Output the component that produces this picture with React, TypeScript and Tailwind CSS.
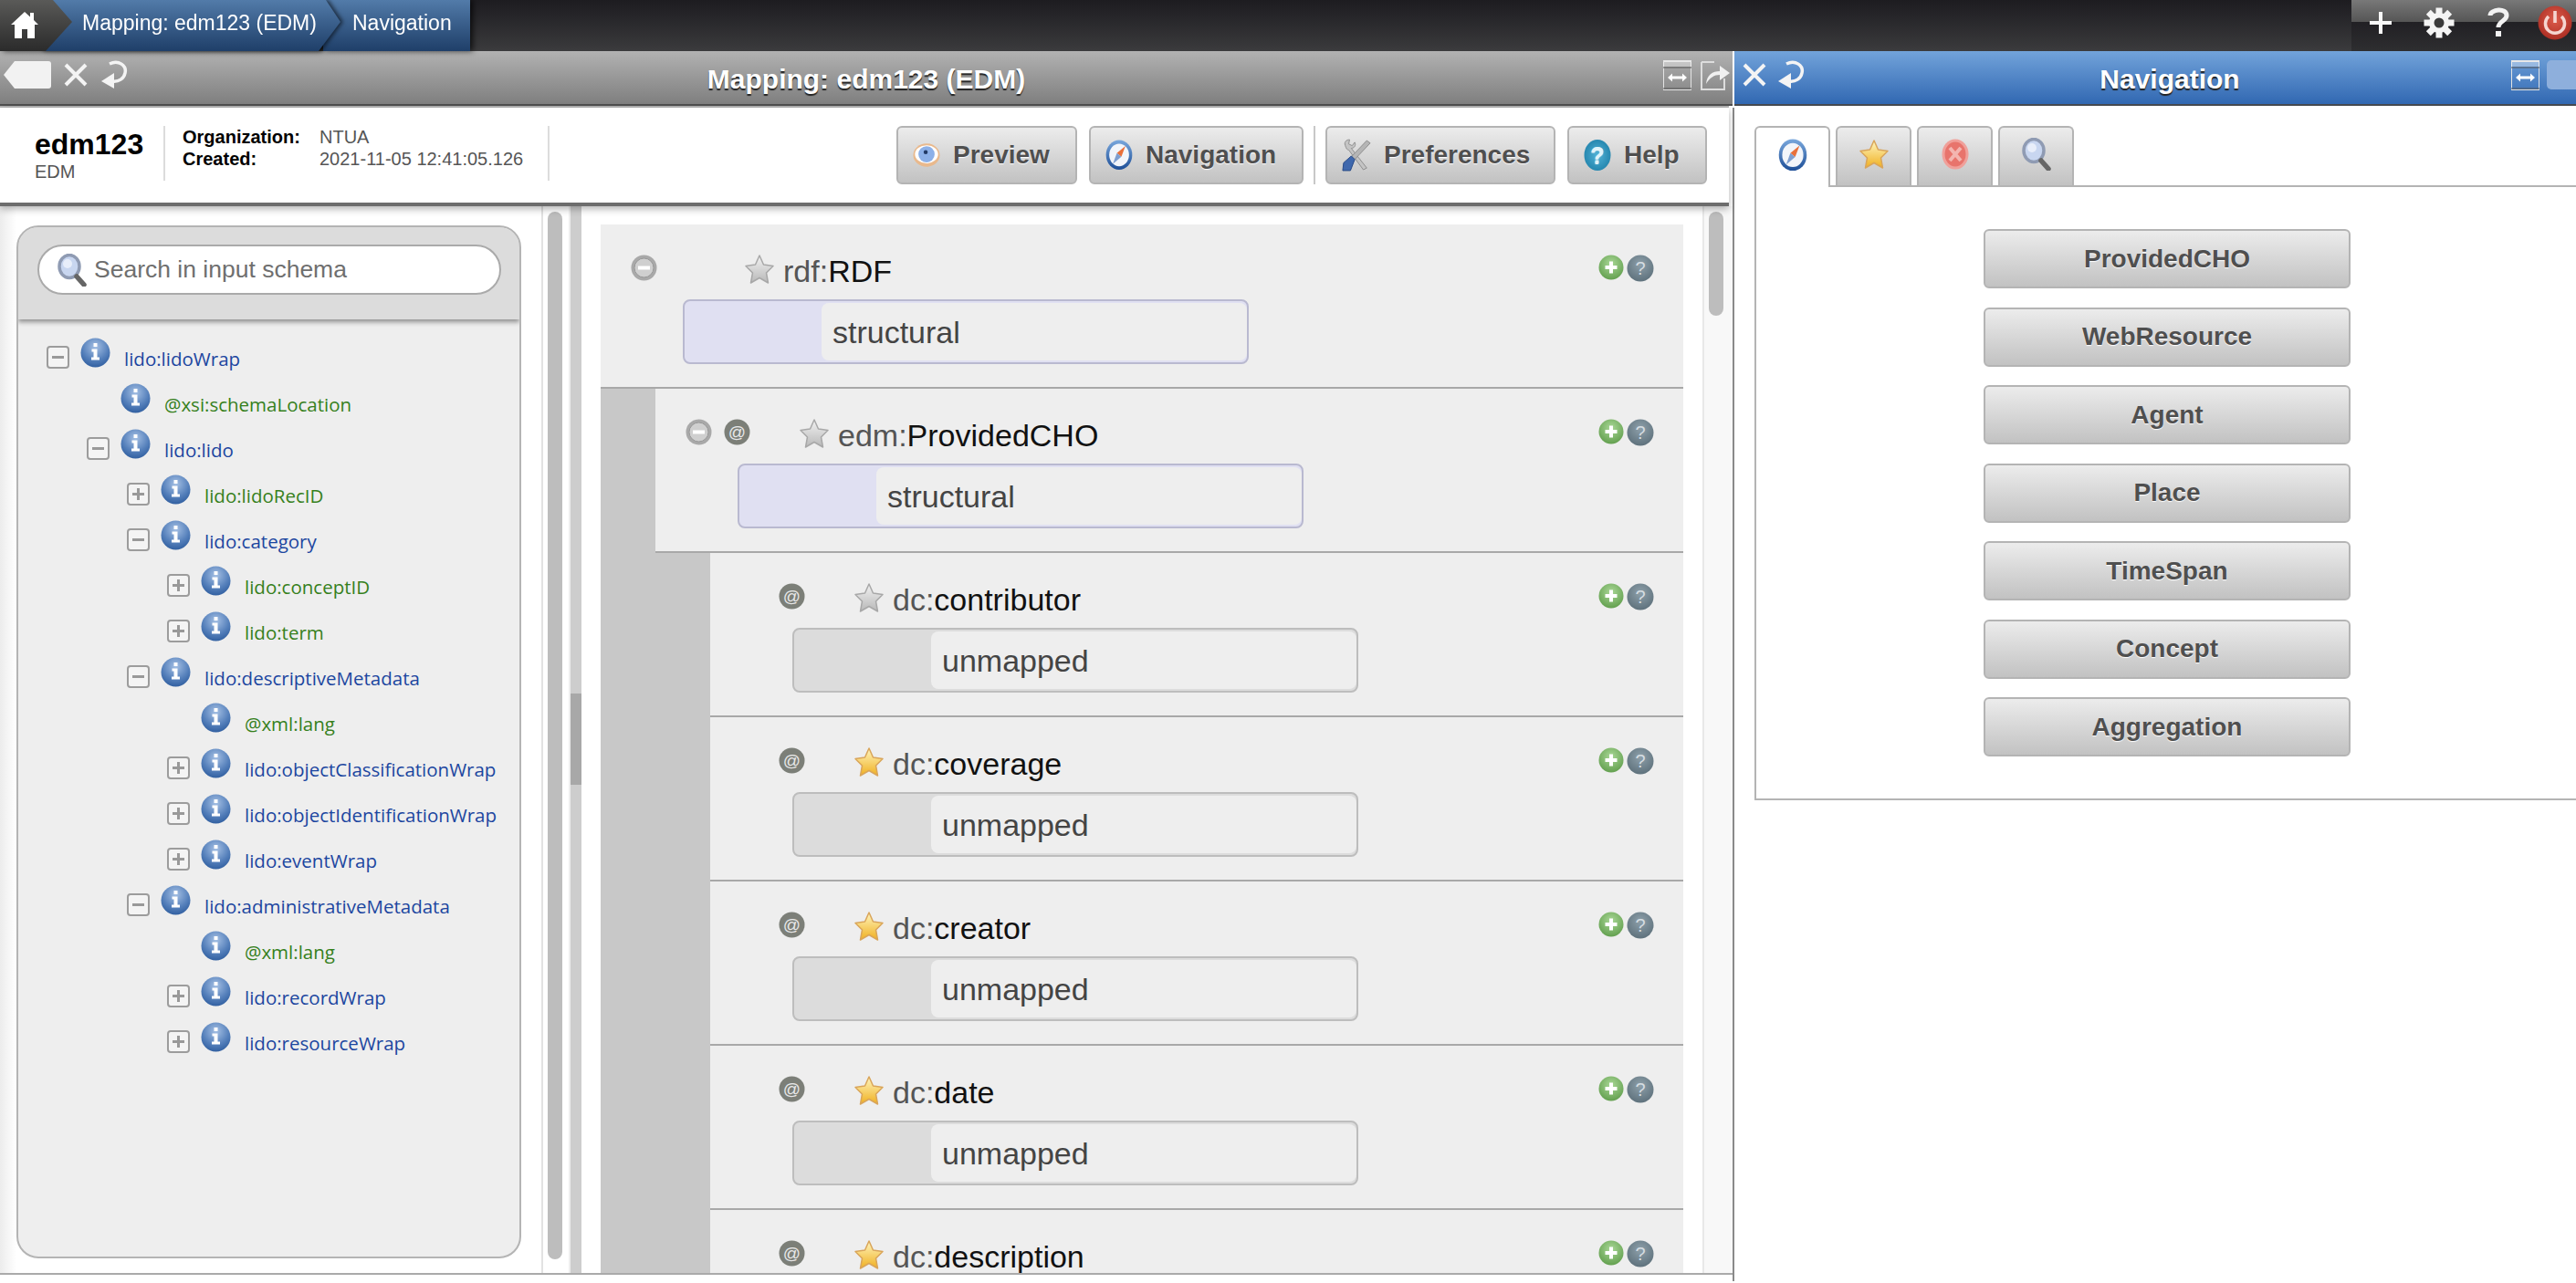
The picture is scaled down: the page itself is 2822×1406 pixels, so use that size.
import React from "react";

const Star = ({ gold = false }: { gold?: boolean }) => (
  <svg width="34" height="34" viewBox="0 0 34 34" className="shrink-0">
    <defs>
      <linearGradient id={gold ? "sg" : "sn"} x1="0" y1="0" x2="0" y2="1">
        <stop offset="0" stopColor={gold ? "#fff6c0" : "#f2f2f2"} />
        <stop offset="1" stopColor={gold ? "#f0b020" : "#b8b8b8"} />
      </linearGradient>
    </defs>
    <path
      d="M17 2 L21.5 12 L32 13.5 L24.5 21 L26.5 32 L17 26.5 L7.5 32 L9.5 21 L2 13.5 L12.5 12 Z"
      fill={gold ? "url(#sg)" : "url(#sn)"}
      stroke={gold ? "#d9a55a" : "#a8a8a8"}
      strokeWidth="1.5"
      strokeLinejoin="round"
    />
  </svg>
);

const InfoOrb = () => (
  <svg width="33" height="33" viewBox="0 0 33 33" className="shrink-0">
    <defs>
      <radialGradient id="orb" cx="0.5" cy="0.3" r="0.75">
        <stop offset="0" stopColor="#a5c0e4" />
        <stop offset="0.6" stopColor="#5580bb" />
        <stop offset="1" stopColor="#2b5a9c" />
      </radialGradient>
    </defs>
    <circle cx="16.5" cy="16.5" r="16" fill="url(#orb)" />
    <rect x="14.5" y="6" width="4" height="4" fill="#fff" />
    <path d="M12.5 12.5 h6 v9 h2.5 v3 h-9 v-3 h2.5 v-6 h-2 z" fill="#fff" />
  </svg>
);

const TreeBox = ({ kind }: { kind: "plus" | "minus" }) => (
  <svg width="25" height="25" viewBox="0 0 25 25" className="shrink-0">
    <rect x="1" y="1" width="23" height="23" rx="3" fill="#f4f4f4" stroke="#9c9c9c" strokeWidth="2" />
    <rect x="6" y="11" width="13" height="3" fill="#999" />
    {kind === "plus" && <rect x="11" y="6" width="3" height="13" fill="#999" />}
  </svg>
);

const MinusCircle = () => (
  <svg width="29" height="29" viewBox="0 0 29 29" className="shrink-0">
    <circle cx="14.5" cy="14.5" r="14" fill="#a9a9a9" />
    <circle cx="14.5" cy="14.5" r="10.5" fill="#cfcfcf" stroke="#989898" />
    <rect x="8" y="12.5" width="13" height="4" fill="#fff" />
  </svg>
);

const AtCircle = () => (
  <svg width="29" height="29" viewBox="0 0 29 29" className="shrink-0">
    <circle cx="14.5" cy="14.5" r="14" fill="#7c7f78" />
    <text x="14.5" y="20.5" textAnchor="middle" fontSize="19" fill="#e8e8e8" fontFamily="Liberation Sans">@</text>
  </svg>
);

const PlusCircle = () => (
  <svg width="28" height="28" viewBox="0 0 28 28" className="shrink-0">
    <defs>
      <radialGradient id="pg" cx="0.5" cy="0.35" r="0.7">
        <stop offset="0" stopColor="#a9d796" />
        <stop offset="1" stopColor="#5e9c4a" />
      </radialGradient>
    </defs>
    <circle cx="14" cy="14" r="13.5" fill="url(#pg)" />
    <rect x="7.5" y="12" width="13" height="4" fill="#fff" />
    <rect x="12" y="7.5" width="4" height="13" fill="#fff" />
  </svg>
);

const QCircle = () => (
  <svg width="30" height="30" viewBox="0 0 30 30" className="shrink-0">
    <defs>
      <radialGradient id="qg" cx="0.5" cy="0.35" r="0.7">
        <stop offset="0" stopColor="#8ea0aa" />
        <stop offset="1" stopColor="#5b6e79" />
      </radialGradient>
    </defs>
    <circle cx="15" cy="15" r="14.5" fill="url(#qg)" />
    <text x="15" y="22" textAnchor="middle" fontSize="20" fill="#d5dde2" fontFamily="Liberation Sans">?</text>
  </svg>
);

const Home = () => (
  <svg width="30" height="32" viewBox="0 0 30 32">
    <path d="M15 2 L21 7.5 V3 h4 V11 L30 16 H26 V31 H18 V21 H12 V31 H4 V16 H0 Z" fill="#fff" />
  </svg>
);

const Tag = () => (
  <svg width="54" height="32" viewBox="0 0 54 32" className="shrink-0">
    <path d="M13 1 H50 Q53 1 53 4 V28 Q53 31 50 31 H13 L1 16 Z" fill="#f2f2f2" />
  </svg>
);

const XMark = () => (
  <svg width="26" height="26" viewBox="0 0 26 26" className="shrink-0">
    <path d="M2 2 L24 24 M24 2 L2 24" stroke="#f4f4f4" strokeWidth="4" />
  </svg>
);

const Undo = () => (
  <svg width="30" height="32" viewBox="0 0 30 32" className="shrink-0">
    <path d="M10 4 C20 -1 29 6 27 14 C26 20 20 24 13 23" fill="none" stroke="#f4f4f4" strokeWidth="3.5" />
    <path d="M1 23 L15 14 L15 31 Z" fill="#f4f4f4" />
  </svg>
);

const ExpandWin = () => (
  <svg width="31" height="33" viewBox="0 0 31 33" className="shrink-0">
    <rect x="0.5" y="0.5" width="30" height="32" fill="none" stroke="#e4e4e4" />
    <rect x="0" y="0" width="31" height="2" fill="#e8e8e8" />
    <rect x="0" y="2" width="31" height="5" fill="#ffffff" fillOpacity="0.35" />
    <rect x="0" y="7" width="31" height="2" fill="#555" fillOpacity="0.5" />
    <rect x="0" y="30" width="31" height="2" fill="#555" fillOpacity="0.5" />
    <path d="M5 19 L10 14.5 V17.5 H21 V14.5 L26 19 L21 23.5 V20.5 H10 V23.5 Z" fill="#fff" />
  </svg>
);

const ShareIcon = () => (
  <svg width="33" height="33" viewBox="0 0 33 33" className="shrink-0">
    <path d="M1 2 H15 M1 2 V32 H26 V20" fill="none" stroke="#ddd" strokeWidth="2" />
    <path d="M6 26 C7 16 13 12 21 12 V6 L32 14 L21 22 V16 C15 16 10 19 6 26 Z" fill="#f0f0f0" />
  </svg>
);

const Compass = ({ s = 30 }: { s?: number }) => (
  <svg width={s} height={s * 1.12} viewBox="0 0 30 34" className="shrink-0">
    <defs>
      <linearGradient id="cg" x1="0" y1="0" x2="0" y2="1">
        <stop offset="0" stopColor="#79a7dc" />
        <stop offset="1" stopColor="#1d4e97" />
      </linearGradient>
    </defs>
    <ellipse cx="15" cy="17" rx="14.5" ry="16.5" fill="url(#cg)" />
    <ellipse cx="15" cy="17" rx="11" ry="12.5" fill="#f2f5fa" />
    <path d="M22 7 L12.5 15 L17.5 19 Z" fill="#e9703a" />
    <path d="M8 27 L12.5 15 L17.5 19 Z" fill="#7f9fd0" />
  </svg>
);

const Eye = () => (
  <svg width="30" height="30" viewBox="0 0 32 32" className="shrink-0">
    <ellipse cx="16" cy="16" rx="15.5" ry="13.5" fill="#e9b98d" />
    <ellipse cx="16" cy="15" rx="13.5" ry="10.5" fill="#fff" />
    <circle cx="16" cy="15" r="9.5" fill="#8cb0e8" />
    <circle cx="15" cy="12.5" r="2.4" fill="#223a66" />
  </svg>
);

const Tools = () => (
  <svg width="32" height="38" viewBox="0 0 34 38" className="shrink-0">
    <path d="M4 8 C2 3 6 1 9 1 L8 6 L12 8 L15 4 C17 8 14 11 11 11 L29 34 L25 36 L8 13 C6 13 5 11 4 8 Z" fill="#c4c4c4" stroke="#8c8c8c" />
    <path d="M29 2 L33 5 L15 24 L11 21 Z" fill="#b5b5b5" stroke="#8c8c8c" />
    <path d="M11 20 L15 24 L10 37 L1 37 L2 28 Z" fill="#3f68ad" stroke="#234684" />
  </svg>
);

const HelpOrb = () => (
  <svg width="30" height="36" viewBox="0 0 30 36" className="shrink-0">
    <defs>
      <radialGradient id="hg" cx="0.5" cy="0.5" r="0.6">
        <stop offset="0" stopColor="#52b2d6" />
        <stop offset="1" stopColor="#1d7fa8" />
      </radialGradient>
    </defs>
    <ellipse cx="15" cy="18" rx="14.5" ry="17" fill="url(#hg)" />
    <text x="15" y="27" textAnchor="middle" fontSize="25" fill="#dff3fa" fontFamily="Liberation Sans">?</text>
  </svg>
);

const RedX = () => (
  <svg width="30" height="34" viewBox="0 0 30 34" className="shrink-0">
    <ellipse cx="15" cy="17" rx="14.5" ry="16.5" fill="#f0a09a" />
    <ellipse cx="15" cy="17" rx="11.5" ry="13.5" fill="#e8746c" />
    <path d="M9 10 L21 24 M21 10 L9 24" stroke="#f3b5b0" strokeWidth="4" />
  </svg>
);

const Magnifier = ({ w = 32, h = 36 }: { w?: number; h?: number }) => (
  <svg width={w} height={h} viewBox="0 0 32 36" className="shrink-0">
    <ellipse cx="13" cy="14" rx="11" ry="12.5" fill="#c8d6f0" stroke="#8f9bb3" strokeWidth="3.5" />
    <ellipse cx="11" cy="11" rx="5" ry="5" fill="#e8eefa" />
    <path d="M21 25 L29 34" stroke="#666" strokeWidth="5.5" strokeLinecap="round" />
  </svg>
);

const Gear = () => (
  <svg width="34" height="34" viewBox="0 0 34 34" className="shrink-0">
    <g fill="#f4f4f4">
      <circle cx="17" cy="17" r="11" />
      {[0, 45, 90, 135, 180, 225, 270, 315].map((a) => (
        <rect key={a} x="13.5" y="0.5" width="7" height="8" transform={`rotate(${a} 17 17)`} />
      ))}
    </g>
    <circle cx="17" cy="17" r="5.5" fill="#3a3a3a" />
  </svg>
);

const Power = () => (
  <svg width="38" height="38" viewBox="0 0 38 38" className="shrink-0">
    <defs>
      <radialGradient id="pw" cx="0.5" cy="0.4" r="0.65">
        <stop offset="0" stopColor="#dd5c4c" />
        <stop offset="1" stopColor="#a82a20" />
      </radialGradient>
    </defs>
    <circle cx="19" cy="19" r="18.5" fill="url(#pw)" />
    <path d="M12 12 A10.5 10.5 0 1 0 26 12" fill="none" stroke="#f5d5d0" strokeWidth="3.5" />
    <rect x="17.2" y="6" width="3.6" height="13" fill="#f5d5d0" />
  </svg>
);

type TreeRow = { level: number; box?: "plus" | "minus"; label: string; blue?: boolean };
const treeRows: TreeRow[] = [
  { level: 0, box: "minus", label: "lido:lidoWrap", blue: true },
  { level: 1, label: "@xsi:schemaLocation" },
  { level: 1, box: "minus", label: "lido:lido", blue: true },
  { level: 2, box: "plus", label: "lido:lidoRecID" },
  { level: 2, box: "minus", label: "lido:category", blue: true },
  { level: 3, box: "plus", label: "lido:conceptID" },
  { level: 3, box: "plus", label: "lido:term" },
  { level: 2, box: "minus", label: "lido:descriptiveMetadata", blue: true },
  { level: 3, label: "@xml:lang" },
  { level: 3, box: "plus", label: "lido:objectClassificationWrap", blue: true },
  { level: 3, box: "plus", label: "lido:objectIdentificationWrap", blue: true },
  { level: 3, box: "plus", label: "lido:eventWrap", blue: true },
  { level: 2, box: "minus", label: "lido:administrativeMetadata", blue: true },
  { level: 3, label: "@xml:lang" },
  { level: 3, box: "plus", label: "lido:recordWrap", blue: true },
  { level: 3, box: "plus", label: "lido:resourceWrap", blue: true },
];

type MapRow = {
  level: number;
  minus?: boolean;
  at?: boolean;
  gold?: boolean;
  prefix: string;
  name: string;
  value?: string;
};
const mapRows: MapRow[] = [
  { level: 0, minus: true, prefix: "rdf:", name: "RDF", value: "structural" },
  { level: 1, minus: true, at: true, prefix: "edm:", name: "ProvidedCHO", value: "structural" },
  { level: 2, at: true, prefix: "dc:", name: "contributor", value: "unmapped" },
  { level: 2, at: true, gold: true, prefix: "dc:", name: "coverage", value: "unmapped" },
  { level: 2, at: true, gold: true, prefix: "dc:", name: "creator", value: "unmapped" },
  { level: 2, at: true, gold: true, prefix: "dc:", name: "date", value: "unmapped" },
  { level: 2, at: true, gold: true, prefix: "dc:", name: "description" },
];

const bandClass = ["w-0", "w-[60px]", "w-[120px]"];
const indentClass = ["w-0", "w-[44px]", "w-[88px]", "w-[132px]"];

const ToolButton = ({ w, icon, label }: { w: string; icon: React.ReactNode; label: string }) => (
  <button
    className={`${w} h-[64px] flex items-center gap-[14px] pl-[16px] rounded-[6px] border-2 border-[#b4b4b4] bg-gradient-to-b from-[#ececec] to-[#c2c2c2] text-[28px] font-bold text-[#4f4f4f] [text-shadow:0_1px_1px_#fff]`}
  >
    {icon}
    <span>{label}</span>
  </button>
);

const TabBtn = ({ active, children }: { active?: boolean; children: React.ReactNode }) => (
  <div
    className={`w-[83px] flex items-center justify-center rounded-t-[6px] border-2 border-b-0 border-[#b4b4b4] pb-[6px] ${
      active ? "bg-white -mb-[2px] h-[67px] z-10" : "h-[65px] bg-gradient-to-b from-[#ececec] to-[#c2c2c2]"
    }`}
  >
    {children}
  </div>
);

export default function App() {
  return (
    <div className="w-[2822px] h-[1406px] overflow-hidden flex flex-col bg-white [font-family:'Liberation_Sans',Arial,sans-serif]">
      {/* top bar */}
      <div className="h-[56px] shrink-0 flex justify-between bg-gradient-to-b from-[#1d1c20] to-[#3b3b3d]">
        <div className="flex drop-shadow-[3px_0_3px_rgba(0,0,0,0.7)]">
          <div className="relative z-20 w-[80px] h-[56px] pl-[12px] pb-[2px] flex items-center bg-gradient-to-b from-[#5a5a58] to-[#2b2b2b] [clip-path:polygon(0_0,58px_0,79px_24px,50px_56px,0_56px)]">
            <Home />
          </div>
          <div className="relative z-10 -ml-[36px] drop-shadow-[3px_0_2px_rgba(0,0,0,0.55)]">
            <div className="w-[330px] h-[56px] pl-[46px] pb-[5px] flex items-center text-[23px] text-white bg-gradient-to-b from-[#527ba9] to-[#1f3f69] [clip-path:polygon(0_0,313px_0,329px_24px,305px_56px,0_56px)]">
              Mapping: edm123 (EDM)
            </div>
          </div>
          <div className="-ml-[20px] w-[161px] h-[56px] pl-[32px] pb-[5px] flex items-center text-[23px] text-white bg-gradient-to-b from-[#527ba9] to-[#1f3f69]">
            Navigation
          </div>
        </div>
        <div className="w-[246px] h-[56px] flex items-center pb-[6px] bg-[linear-gradient(#787878,#555_43%,#212024_43%,#2e2e30)]">
          <svg width="36" height="36" viewBox="0 0 36 36" className="shrink-0 ml-[14px]">
            <path d="M18 6 V30 M6 18 H30" stroke="#f8f8f8" strokeWidth="4" />
          </svg>
          <div className="ml-[29px]"><Gear /></div>
          <svg width="26" height="36" viewBox="0 0 26 36" className="shrink-0 ml-[35px]">
            <path d="M4 10 C4 3 22 1 22 10 C22 16 13 16 13 23" fill="none" stroke="#f2f2f2" strokeWidth="5" />
            <rect x="10" y="27" width="6" height="6" fill="#f2f2f2" />
          </svg>
          <div className="ml-[30px]"><Power /></div>
        </div>
      </div>

      <div className="flex-1 flex min-h-0">
        {/* left main */}
        <div className="w-[1900px] shrink-0 flex flex-col">
          {/* gray title */}
          <div className="h-[62px] shrink-0 border-r-2 border-white">
            <div className="h-[60px] flex items-center bg-gradient-to-b from-[#b2b2b2] to-[#7f7f7f] border-b-2 border-[#4f4f4f] pl-[3px] pb-[6px]">
              <Tag />
              <div className="ml-[13px]"><XMark /></div>
              <div className="ml-[14px]"><Undo /></div>
              <div className="flex-1 pr-[64px] pt-[9px] text-center text-[30px] font-bold text-white [text-shadow:0_2px_1px_#222]">
                Mapping: edm123 (EDM)
              </div>
              <div className="flex gap-[10px] pr-[2px]">
                <ExpandWin />
                <ShareIcon />
              </div>
            </div>
            <div className="h-[2px] w-[1894px] bg-[#b4b4b4]" />
          </div>

          <div className="flex-1 min-h-0 flex flex-col border-r-2 border-[#8a8a8a]">
            {/* header */}
            <div className="relative z-10 w-[1894px] h-[108px] shrink-0 flex items-start pt-[20px] bg-white border-b-[4px] border-[#6d6d6d] shadow-[0_3px_8px_rgba(0,0,0,0.3)]">
              <div className="w-[141px] ml-[38px] h-[60px]">
                <div className="text-[32px] leading-[36px] font-bold text-black mt-[2px]">edm123</div>
                <div className="text-[20px] leading-[24px] text-[#555]">EDM</div>
              </div>
              <div className="w-[2px] h-[60px] bg-[#dcdcdc]" />
              <div className="w-[419px] h-[60px] pl-[19px] text-[20px] leading-[24px] grid grid-cols-[150px_1fr] content-start">
                <div className="font-bold text-black">Organization:</div>
                <div className="text-[#555]">NTUA</div>
                <div className="font-bold text-black">Created:</div>
                <div className="text-[#555]">2021-11-05 12:41:05.126</div>
              </div>
              <div className="w-[2px] h-[60px] bg-[#dcdcdc]" />
              <div className="flex items-center ml-[380px] gap-[13px]">
                <ToolButton w="w-[198px]" icon={<Eye />} label="Preview" />
                <ToolButton w="w-[235px]" icon={<Compass s={30} />} label="Navigation" />
                <div className="w-[2px] h-[64px] bg-[#c8c8c8] -mx-[2px]" />
                <ToolButton w="w-[252px]" icon={<Tools />} label="Preferences" />
                <ToolButton w="w-[153px]" icon={<HelpOrb />} label="Help" />
              </div>
            </div>

            {/* body */}
            <div className="flex-1 min-h-0 flex">
              {/* tree */}
              <div className="w-[593px] shrink-0 pt-[21px] pl-[18px] bg-[linear-gradient(to_right,#ececec,#ffffff_18px)]">
                <div className="w-[553px] h-[1132px] rounded-[24px] border-2 border-[#b4b4b4] bg-[#eeeeee] overflow-hidden">
                  <div className="h-[101px] bg-[#dcdcdc] pt-[19px] pl-[21px] shadow-[0_3px_5px_rgba(0,0,0,0.4)]">
                    <div className="w-[508px] h-[55px] rounded-full bg-white border-2 border-[#aaaaaa] flex items-center pl-[20px] gap-[8px]">
                      <Magnifier w={32} h={36} />
                      <span className="text-[26.5px] text-[#6f6f6f]">Search in input schema</span>
                    </div>
                  </div>
                  <div className="pt-[20px]">
                    {treeRows.map((r, i) => (
                      <div key={i} className="h-[50px] flex pl-[31px]">
                        <div className={`${indentClass[r.level]} shrink-0`} />
                        <div className="w-[25px] pt-[9px] shrink-0">{r.box && <TreeBox kind={r.box} />}</div>
                        <div className="ml-[12px] shrink-0"><InfoOrb /></div>
                        <div
                          className={`ml-[15px] pt-[8px] whitespace-nowrap [font-family:'Open_Sans',sans-serif] text-[20.5px] leading-[30px] ${
                            r.blue ? "text-[#1c46a0]" : "text-[#36801c]"
                          }`}
                        >
                          {r.label}
                        </div>
                      </div>
                    ))}
                  </div>
                </div>
              </div>
              {/* scrollbar */}
              <div className="w-[30px] shrink-0 border-l-2 border-[#e2e2e2] pt-[6px] pl-[5px]">
                <div className="w-[16px] h-[1148px] rounded-full bg-[#bdbdbd]" />
              </div>
              {/* divider */}
              <div className="w-[14px] shrink-0 bg-[#cdcdcd] pt-[534px] border-l-2 border-[#eeeeee]">
                <div className="w-[12px] h-[100px] bg-[#a8a8a8]" />
              </div>
              {/* mapping */}
              <div className="flex-1 min-w-0 flex pt-[20px] pl-[21px] overflow-hidden">
                <div className="w-[1186px] shrink-0">
                  {mapRows.map((r, i) => (
                    <div key={i} className="h-[180px] flex">
                      <div className={`${bandClass[r.level]} shrink-0 bg-[#c8c8c8]`} />
                      <div className="flex-1 border-b-2 border-[#a8a8a8] bg-[#eeeeee] pt-[33px] pl-[33px]">
                        <div className="flex items-start h-[49px]">
                          <div className="w-[29px] shrink-0">{r.minus && <MinusCircle />}</div>
                          <div className="w-[29px] ml-[13px] shrink-0">{r.at && <AtCircle />}</div>
                          <div className="ml-[53px] -mt-[1px]"><Star gold={r.gold} /></div>
                          <div className="ml-[9px] -mt-[1px] text-[34px] leading-[38px] text-[#555]">
                            {r.prefix}
                            <span className="text-[#111]">{r.name}</span>
                          </div>
                          <div className="ml-auto flex gap-[3px] pr-[32px]">
                            <PlusCircle />
                            <QCircle />
                          </div>
                        </div>
                        {r.value && (
                          <div
                            className={`ml-[57px] w-[620px] h-[71px] rounded-[8px] border-2 flex pl-[150px] py-[2px] ${
                              r.value === "structural"
                                ? "border-[#b9b9d0] bg-[#e0e0f2]"
                                : "border-[#bdbdbd] bg-[#dcdcdc]"
                            }`}
                          >
                            <div className="flex-1 flex items-center pl-[12px] pt-[1px] rounded-[8px] bg-[#eeeeee] text-[34px] text-[#444]">
                              {r.value}
                            </div>
                          </div>
                        )}
                      </div>
                    </div>
                  ))}
                </div>
                <div className="w-[21px] shrink-0" />
                <div className="w-[2px] shrink-0 -mt-[20px] bg-[#e8e8e8]" />
                <div className="w-[32px] shrink-0 -mt-[20px] pt-[6px] pl-[5px] bg-[#f8f8f8]">
                  <div className="w-[16px] h-[114px] rounded-full bg-[#bdbdbd]" />
                </div>
              </div>
            </div>
            <div className="h-[9px] shrink-0 border-t-2 border-[#aaaaaa]" />
          </div>
          <div className="h-[2px] shrink-0" />
        </div>

        {/* right panel */}
        <div className="flex-1 min-w-0 flex flex-col">
          <div className="h-[60px] shrink-0 flex items-center bg-gradient-to-b from-[#72a3da] to-[#3168b2] border-b-2 border-[#45494f] pl-[9px] pb-[6px]">
            <XMark />
            <div className="ml-[12px]"><Undo /></div>
            <div className="flex-1 pt-[9px] pl-[26px] text-center text-[30px] font-bold text-white [text-shadow:0_2px_1px_#222]">
              Navigation
            </div>
            <ExpandWin />
            <div className="ml-[8px] w-[32px] h-[32px] rounded-l-[5px] bg-[#8eafdc]" />
          </div>
          <div className="pt-[22px] pl-[22px]">
            <div className="flex gap-[6px]">
              <TabBtn active><Compass s={32} /></TabBtn>
              <TabBtn><Star gold /></TabBtn>
              <TabBtn><RedX /></TabBtn>
              <TabBtn><Magnifier /></TabBtn>
            </div>
            <div className="h-[674px] border-t-2 border-l-2 border-b-2 border-[#b4b4b4] pt-[46px] pl-[2px] flex flex-col items-center gap-[20.5px]">
              {["ProvidedCHO", "WebResource", "Agent", "Place", "TimeSpan", "Concept", "Aggregation"].map((t) => (
                <button
                  key={t}
                  className="w-[402px] h-[65px] shrink-0 rounded-[6px] border-2 border-[#b4b4b4] bg-gradient-to-b from-[#ececec] to-[#c2c2c2] text-[28px] font-bold text-[#4f4f4f] [text-shadow:0_1px_1px_#fff]"
                >
                  {t}
                </button>
              ))}
            </div>
          </div>
        </div>
      </div>
    </div>
  );
}
